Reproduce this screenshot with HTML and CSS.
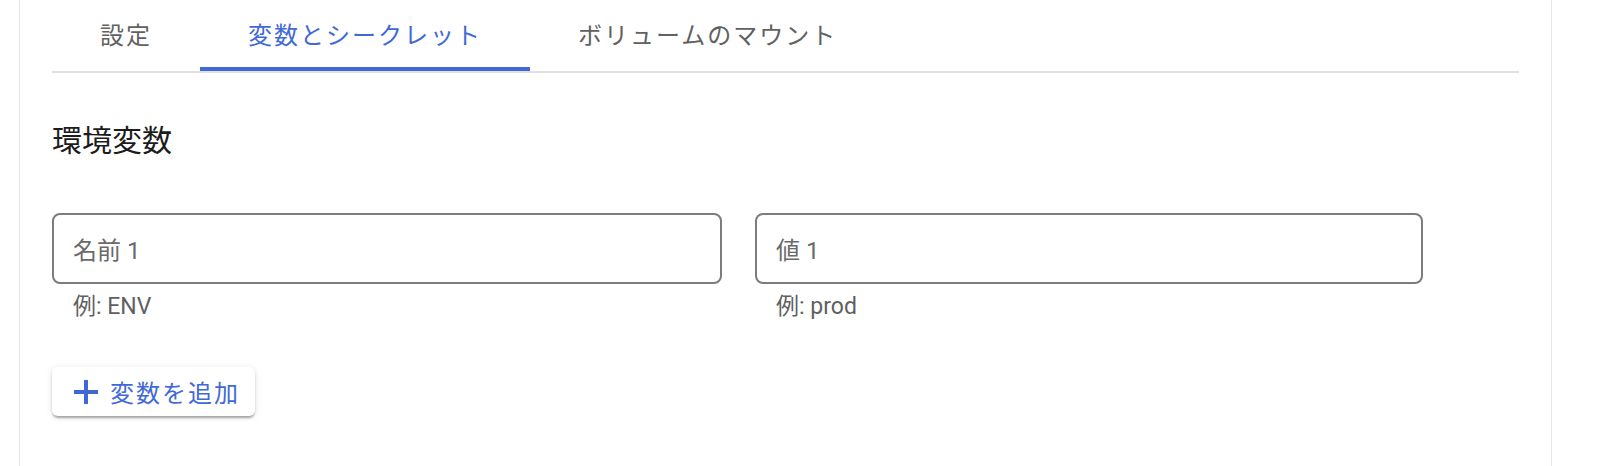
FILE: index.html
```html
<!DOCTYPE html>
<html lang="ja">
<head>
<meta charset="utf-8">
<title>変数とシークレット</title>
<link rel="stylesheet" href="styles.css">
</head>
<body>
<div class="card">
  <nav class="tabs">
    <div class="tab">設定</div>
    <div class="tab active">変数とシークレット</div>
    <div class="tab">ボリュームのマウント</div>
  </nav>
  <h2 class="section-title">環境変数</h2>
  <div class="fields">
    <div class="field">
      <div class="box"><label class="label">名前 1</label></div>
      <div class="hint">例: ENV</div>
    </div>
    <div class="field">
      <div class="box"><label class="label">値 1</label></div>
      <div class="hint">例: prod</div>
    </div>
  </div>
  <button class="add-btn" type="button">
    <svg class="plus" width="24" height="24" viewBox="0 0 24 24" aria-hidden="true">
      <rect x="0" y="10" width="24" height="4" fill="currentColor"/>
      <rect x="10" y="0" width="4" height="24" fill="currentColor"/>
    </svg>
    <span>変数を追加</span>
  </button>
</div>
</body>
</html>
```
FILE: styles.css
```css
html, body {
  margin: 0;
  padding: 0;
  background: #ffffff;
}
body {
  font-family: Roboto, "Noto Sans CJK JP", sans-serif;
  font-weight: 400;
  color: #202124;
}
.card {
  box-sizing: border-box;
  margin-left: 19px;
  width: 1533px;
  min-height: 466px;
  padding: 0 32px;
  background: #ffffff;
  border-left: 1px solid #e6e6e6;
  border-right: 1px solid #e6e6e6;
}
.tabs {
  display: flex;
  border-bottom: 2px solid #e0e0e0;
}
.tab {
  box-sizing: border-box;
  height: 71px;
  padding: 0 48px;
  display: flex;
  align-items: center;
  font-size: 24px;
  letter-spacing: 2px;
  color: #616161;
  border-bottom: 4px solid transparent;
}
.tab.active {
  color: #4169d6;
  border-bottom-color: #4169d6;
}
.section-title {
  margin: 48px 0 0;
  font-size: 30px;
  line-height: 40px;
  font-weight: 400;
  color: #1c1c1c;
}
.fields {
  display: grid;
  grid-template-columns: 670px 668px;
  column-gap: 33px;
  margin-top: 52px;
}
.box {
  box-sizing: border-box;
  height: 71px;
  border: 2px solid #7c7c7c;
  border-radius: 8px;
  padding: 0 19px;
  display: flex;
  align-items: center;
}
.label {
  font-size: 24px;
  color: #6a6a6a;
}
.hint {
  padding-left: 21px;
  margin-top: 8px;
  font-size: 23px;
  line-height: 30px;
  color: #5f5f5f;
}
.add-btn {
  margin-top: 45px;
  box-sizing: border-box;
  height: 49px;
  padding: 0 15px 0 22px;
  display: flex;
  align-items: center;
  gap: 12px;
  border: none;
  border-radius: 6px;
  background: #ffffff;
  color: #4169d6;
  font-family: Roboto, "Noto Sans CJK JP", sans-serif;
  font-weight: 400;
  font-size: 24px;
  letter-spacing: 2px;
  box-shadow: 0 3px 2px -1px rgba(0,0,0,0.22), 0 2px 3px rgba(0,0,0,0.12), 0 1px 7px rgba(0,0,0,0.1);
}
.plus {
  display: block;
  flex: none;
}
```
